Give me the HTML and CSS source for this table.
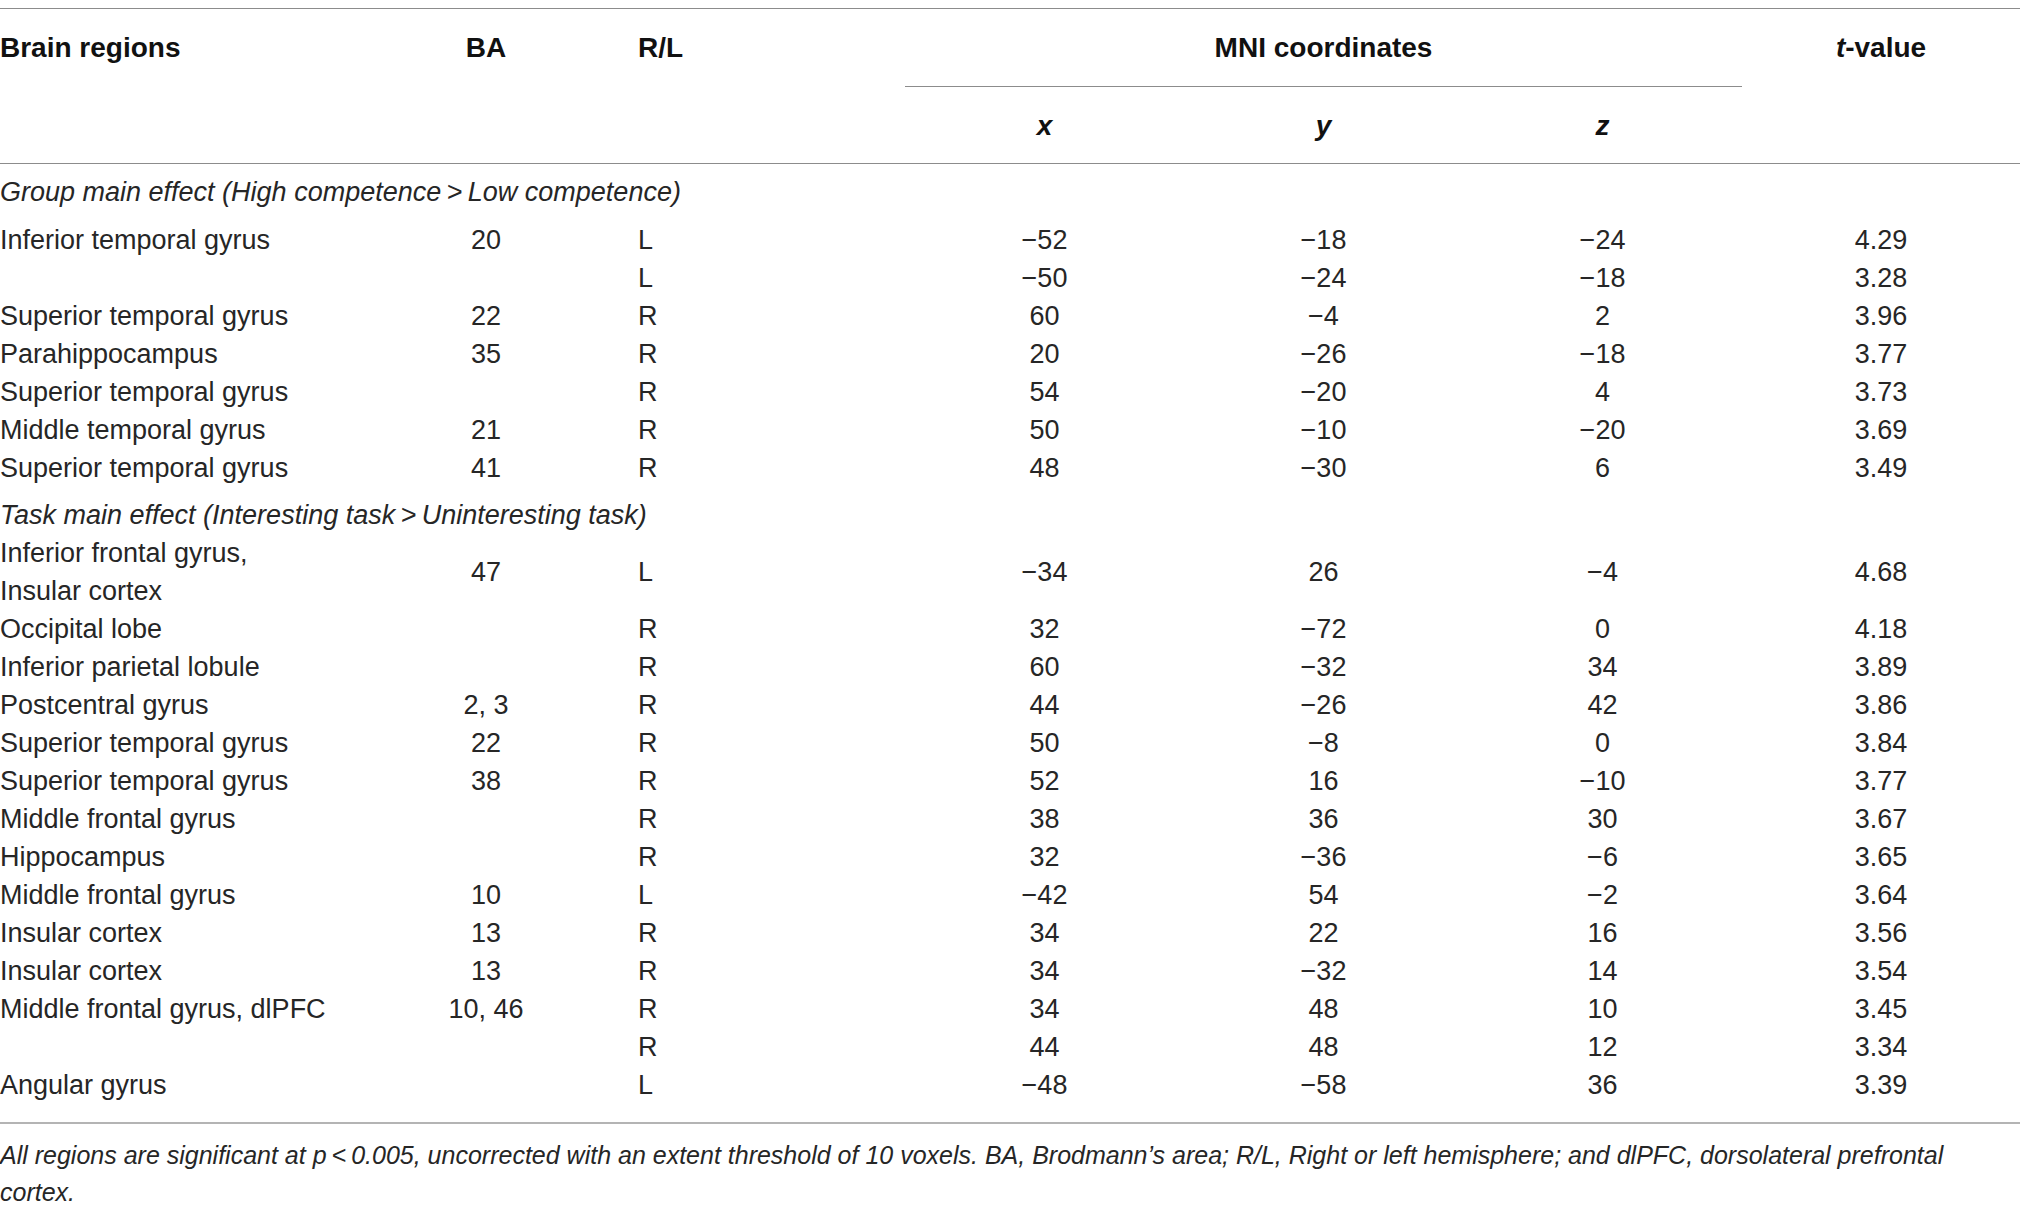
FILE: index.html
```html
<!DOCTYPE html>
<html lang="en">
<head>
    <meta charset="UTF-8">
    <meta name="viewport" content="width=device-width, initial-scale=1.0">
    <title>Brain regions – MNI coordinates</title>
    <link rel="stylesheet" href="styles.css">
</head>
<body>
<table class="results">
    <colgroup>
        <col class="col-region">
        <col class="col-ba">
        <col class="col-side">
        <col class="col-axis">
        <col class="col-axis">
        <col class="col-axis">
        <col class="col-tval">
    </colgroup>
    <thead>
    <tr>
        <th rowspan="2" class="region">Brain regions</th>
        <th rowspan="2" class="ba">BA</th>
        <th rowspan="2" class="side">R/L</th>
        <th colspan="3" class="mni">MNI coordinates</th>
        <th rowspan="2" class="tval"><i>t</i>-value</th>
    </tr>
    <tr>
        <th class="axis"><i>x</i></th>
        <th class="axis"><i>y</i></th>
        <th class="axis"><i>z</i></th>
    </tr>
    </thead>
    <tbody>
    <tr class="section first"><td colspan="7">Group main effect (High competence&thinsp;&gt;&thinsp;Low competence)</td></tr>
    <tr><td>Inferior temporal gyrus</td><td>20</td><td>L</td><td>−52</td><td>−18</td><td>−24</td><td>4.29</td></tr>
    <tr><td></td><td></td><td>L</td><td>−50</td><td>−24</td><td>−18</td><td>3.28</td></tr>
    <tr><td>Superior temporal gyrus</td><td>22</td><td>R</td><td>60</td><td>−4</td><td>2</td><td>3.96</td></tr>
    <tr><td>Parahippocampus</td><td>35</td><td>R</td><td>20</td><td>−26</td><td>−18</td><td>3.77</td></tr>
    <tr><td>Superior temporal gyrus</td><td></td><td>R</td><td>54</td><td>−20</td><td>4</td><td>3.73</td></tr>
    <tr><td>Middle temporal gyrus</td><td>21</td><td>R</td><td>50</td><td>−10</td><td>−20</td><td>3.69</td></tr>
    <tr><td>Superior temporal gyrus</td><td>41</td><td>R</td><td>48</td><td>−30</td><td>6</td><td>3.49</td></tr>
    <tr class="section"><td colspan="7">Task main effect (Interesting task&thinsp;&gt;&thinsp;Uninteresting task)</td></tr>
    <tr><td>Inferior frontal gyrus,<br>Insular cortex</td><td>47</td><td>L</td><td>−34</td><td>26</td><td>−4</td><td>4.68</td></tr>
    <tr><td>Occipital lobe</td><td></td><td>R</td><td>32</td><td>−72</td><td>0</td><td>4.18</td></tr>
    <tr><td>Inferior parietal lobule</td><td></td><td>R</td><td>60</td><td>−32</td><td>34</td><td>3.89</td></tr>
    <tr><td>Postcentral gyrus</td><td>2, 3</td><td>R</td><td>44</td><td>−26</td><td>42</td><td>3.86</td></tr>
    <tr><td>Superior temporal gyrus</td><td>22</td><td>R</td><td>50</td><td>−8</td><td>0</td><td>3.84</td></tr>
    <tr><td>Superior temporal gyrus</td><td>38</td><td>R</td><td>52</td><td>16</td><td>−10</td><td>3.77</td></tr>
    <tr><td>Middle frontal gyrus</td><td></td><td>R</td><td>38</td><td>36</td><td>30</td><td>3.67</td></tr>
    <tr><td>Hippocampus</td><td></td><td>R</td><td>32</td><td>−36</td><td>−6</td><td>3.65</td></tr>
    <tr><td>Middle frontal gyrus</td><td>10</td><td>L</td><td>−42</td><td>54</td><td>−2</td><td>3.64</td></tr>
    <tr><td>Insular cortex</td><td>13</td><td>R</td><td>34</td><td>22</td><td>16</td><td>3.56</td></tr>
    <tr><td>Insular cortex</td><td>13</td><td>R</td><td>34</td><td>−32</td><td>14</td><td>3.54</td></tr>
    <tr><td>Middle frontal gyrus, dlPFC</td><td>10, 46</td><td>R</td><td>34</td><td>48</td><td>10</td><td>3.45</td></tr>
    <tr><td></td><td></td><td>R</td><td>44</td><td>48</td><td>12</td><td>3.34</td></tr>
    <tr><td>Angular gyrus</td><td></td><td>L</td><td>−48</td><td>−58</td><td>36</td><td>3.39</td></tr>
    </tbody>
</table>
<p class="footnote">All regions are significant at p&thinsp;&lt;&thinsp;0.005, uncorrected with an extent threshold of 10 voxels. BA, Brodmann’s area; R/L, Right or left hemisphere; and dlPFC, dorsolateral prefrontal cortex.</p>
</body>
</html>
```

FILE: styles.css
```css
body {
    font-family: "Liberation Sans", Arial, sans-serif;
    color: #262626;
    background-color: #fff;
    margin: 0;
    padding: 0;
}
.results {
    width: 2020px;
    margin-top: 8px;
    border-collapse: collapse;
    table-layout: fixed;
    border-top: 1px solid #8c8c8c;
}
.col-region {
    width: 390px;
}
.col-ba {
    width: 192px;
}
.col-side {
    width: 323px;
}
.col-axis {
    width: 279px;
}
.col-tval {
    width: 278px;
}
thead {
    border-bottom: 1px solid #8c8c8c;
}
th {
    font-size: 28px;
    font-weight: bold;
    color: #111;
    line-height: 38px;
    vertical-align: top;
    padding: 20px 0 19px;
    text-align: center;
}
th.region {
    text-align: left;
}
th.side {
    text-align: left;
    padding-left: 56px;
}
th.mni {
    border-bottom: 1px solid #8c8c8c;
}
th.axis {
    padding: 20px 0 18px;
}
tbody {
    border-bottom: 2px solid #b4b4b4;
}
td {
    font-size: 27px;
    line-height: 38px;
    padding: 0;
    text-align: center;
    vertical-align: middle;
    white-space: nowrap;
}
td:first-child {
    text-align: left;
}
td:nth-child(3) {
    text-align: left;
    padding-left: 56px;
}
.section td {
    font-style: italic;
    text-align: left;
    padding-top: 9px;
}
.section.first td {
    padding-bottom: 10px;
}
tbody tr:last-child td {
    padding-bottom: 18px;
}
.footnote {
    font-size: 25px;
    font-style: italic;
    line-height: 37px;
    margin: 13px 0 0;
    max-width: 2000px;
}
```
